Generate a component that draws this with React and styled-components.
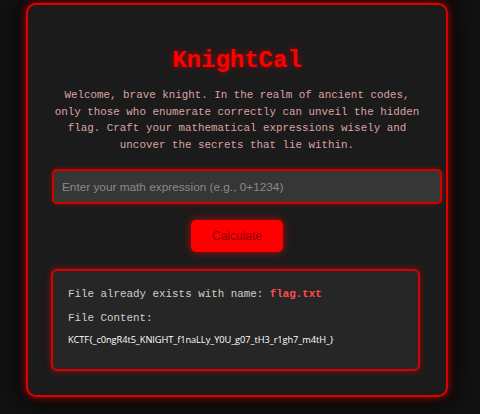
import React from "react";
import styled, { createGlobalStyle } from "styled-components";

const GlobalStyle = createGlobalStyle`
  html, body {
    margin: 0;
    padding: 0;
    background: #121212;
  }
  body {
    font-family: "Courier New", "Nimbus Mono PS", "FreeMono", "Liberation Mono", monospace;
  }
  * { box-sizing: content-box; }
`;

const mono = `"Courier New", "Nimbus Mono PS", "FreeMono", "Liberation Mono", monospace`;

const Page = styled.div`
  width: 480px;
  height: 414px;
  display: flex;
  justify-content: center;
  align-items: flex-start;
  padding-top: 3px;
  box-sizing: border-box;
  background: #121212;
  overflow: hidden;
`;

const Card = styled.div`
  width: 370px;
  margin-left: -6px;
  padding: 24px;
  background: #1b1b1b;
  border: 2px solid #e00000;
  border-radius: 10px;
  box-shadow: 0 0 8px rgba(255, 0, 0, 0.75), 0 0 26px 6px rgba(0, 0, 0, 0.85);
  display: flex;
  flex-direction: column;
  align-items: center;
`;

const Title = styled.h1`
  margin: 18px 0 13px;
  font-family: ${mono};
  font-weight: bold;
  font-size: 24px;
  line-height: 27px;
  color: #ff0000;
  text-shadow: 0 0 6px rgba(255, 0, 0, 0.6);
`;

const Intro = styled.p`
  margin: 0 0 16px;
  font-family: ${mono};
  font-size: 10.85px;
  line-height: 16.5px;
  color: #dba3a3;
  text-align: center;
`;

const Input = styled.input`
  align-self: stretch;
  width: 100%;
  margin: 0 0 16px;
  padding: 8px;
  height: 15px;
  font-family: "Liberation Sans", Arial, sans-serif;
  font-size: 11.8px;
  color: #ddd;
  background: #363636;
  border: 2px solid #d40000;
  border-radius: 5px;
  box-shadow: 0 0 5px rgba(255, 0, 0, 0.45);
  outline: none;
  &::placeholder {
    color: #8a8a8a;
  }
`;

const Button = styled.button`
  margin: 0 0 17px;
  padding: 8px 21px;
  height: 32px;
  box-sizing: border-box;
  font-family: "Liberation Sans", Arial, sans-serif;
  font-size: 12px;
  line-height: 16px;
  color: #8a0000;
  background: #ff0000;
  border: none;
  border-radius: 5px;
  box-shadow: 0 0 8px rgba(255, 0, 0, 0.7);
  cursor: pointer;
`;

const Result = styled.div`
  align-self: stretch;
  width: 335px;
  padding: 15px 15px 21px;
  margin-left: -1px;
  background: #262626;
  border: 2px solid #d80000;
  border-radius: 6px;
  box-shadow: 0 0 6px rgba(255, 0, 0, 0.5);
  display: flex;
  flex-direction: column;
`;

const Line = styled.div`
  font-family: ${mono};
  font-size: 10.85px;
  line-height: 16px;
  color: #cfcfcf;
  margin-bottom: ${(p) => p.$gap}px;
`;

const FileName = styled.span`
  font-weight: bold;
  color: #ff4d4d;
`;

const Flag = styled.div`
  font-family: "Open Sans", "DejaVu Sans", sans-serif;
  font-size: 9.3px;
  line-height: 16px;
  color: #ffffff;
  letter-spacing: -0.1px;
`;

export default function App() {
  return (
    <>
      <GlobalStyle />
      <Page>
        <Card>
          <Title>KnightCal</Title>
          <Intro>
            Welcome, brave knight. In the realm of ancient codes, only those who
            enumerate correctly can unveil the hidden flag. Craft your
            mathematical expressions wisely and uncover the secrets that lie
            within.
          </Intro>
          <Input placeholder="Enter your math expression (e.g., 0+1234)" />
          <Button>Calculate</Button>
          <Result>
            <Line $gap={8}>
              File already exists with name: <FileName>flag.txt</FileName>
            </Line>
            <Line $gap={6}>File Content:</Line>
            <Flag>KCTF{"{"}_c0ngR4t5_KNIGHT_f1naLLy_Y0U_g07_tH3_r1gh7_m4tH_{"}"}</Flag>
          </Result>
        </Card>
      </Page>
    </>
  );
}
